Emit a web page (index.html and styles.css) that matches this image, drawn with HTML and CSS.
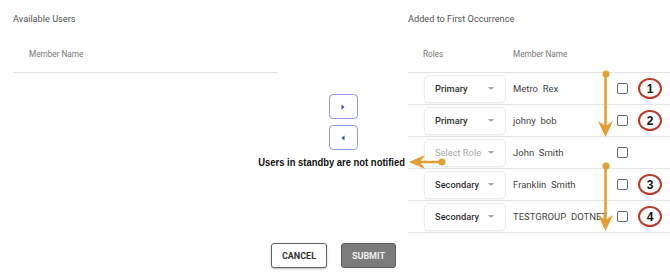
FILE: index.html
```html
<!doctype html>
<html>
<head>
	<meta charset="utf-8">
	<link rel="stylesheet" href="styles.css">
</head>
<body>
<div class="page">
	<div class="lists">
		<section class="panel panel-available">
			<h2 class="panel-title">Available Users</h2>
			<div class="table-head">
				<span class="head-name">Member Name</span>
			</div>
		</section>

		<div class="transfer">
			<button class="move-btn"><svg width="6" height="8" viewBox="0 0 6 8"><path d="M1.5 1.5 L4.5 4 L1.5 6.5 Z" fill="#3949ab"/></svg></button>
			<button class="move-btn"><svg width="6" height="8" viewBox="0 0 6 8"><path d="M4.5 1.5 L1.5 4 L4.5 6.5 Z" fill="#3949ab"/></svg></button>
		</div>

		<section class="panel panel-added">
			<h2 class="panel-title">Added to First Occurrence</h2>
			<div class="table-head">
				<span class="head-role">Roles</span>
				<span class="head-name">Member Name</span>
			</div>

			<div class="row">
				<div class="role-select"><span>Primary</span><i class="caret"></i></div>
				<span class="member">Metro&nbsp; Rex</span>
				<span class="check"></span>
				<span class="badge">1</span>
			</div>
			<div class="row">
				<div class="role-select"><span>Primary</span><i class="caret"></i></div>
				<span class="member">johny&nbsp; bob</span>
				<span class="check"></span>
				<span class="badge">2</span>
			</div>
			<div class="row">
				<div class="role-select empty"><span>Select Role</span><i class="caret"></i></div>
				<span class="member">John&nbsp; Smith</span>
				<span class="check"></span>
			</div>
			<div class="row">
				<div class="role-select"><span>Secondary</span><i class="caret"></i></div>
				<span class="member">Franklin&nbsp; Smith</span>
				<span class="check"></span>
				<span class="badge">3</span>
			</div>
			<div class="row">
				<div class="role-select"><span>Secondary</span><i class="caret"></i></div>
				<span class="member">TESTGROUP&nbsp; DOTNET</span>
				<span class="check"></span>
				<span class="badge">4</span>
			</div>
		</section>
	</div>

	<div class="actions">
		<button class="btn btn-cancel">Cancel</button>
		<button class="btn btn-submit">Submit</button>
	</div>

	<!-- callout arrows drawn over the table -->
	<svg class="annotations" width="670" height="272" viewBox="0 0 670 272">
		<g fill="#e29f33" stroke="#e29f33">
			<circle cx="606" cy="74" r="3.5" stroke="none"/>
			<line x1="605.5" y1="74" x2="605.5" y2="128" stroke-width="2.5"/>
			<path d="M598 121 L605.5 137 L613 121 L605.5 126 Z" stroke="none"/>

			<circle cx="606" cy="166" r="3.5" stroke="none"/>
			<line x1="605.5" y1="166" x2="605.5" y2="222" stroke-width="2.5"/>
			<path d="M598 215 L605.5 231 L613 215 L605.5 220 Z" stroke="none"/>

			<circle cx="442" cy="162" r="3.5" stroke="none"/>
			<line x1="442" y1="162" x2="417" y2="162" stroke-width="2.5"/>
			<path d="M425 155 L409 162 L425 169 L420 162 Z" stroke="none"/>
		</g>
	</svg>
	<div class="note">Users in standby are not notified</div>
</div>
</body>
</html>
```

FILE: styles.css
```css
body { margin: 0; background: #fff; font-family: Roboto, "Liberation Sans", sans-serif; color: #444; }
.page { position: relative; width: 670px; height: 272px; overflow: hidden; }

.lists { display: flex; padding-top: 12px; }
.panel-available { width: 265px; margin-left: 13px; }
.panel-added { flex: 1; }
.panel-title { margin: 0; font-size: 9.2px; font-weight: 400; line-height: 14px; color: #555; }

.table-head { display: flex; align-items: center; height: 36px; margin-top: 10px; border-bottom: 1px solid #e4e4e4; font-size: 8.2px; color: #777; }
.panel-available .head-name { padding-left: 16px; }
.head-role { width: 90px; padding-left: 15px; }

.transfer { width: 130px; display: flex; flex-direction: column; align-items: center; gap: 6px; padding-top: 82px; }
.move-btn { width: 29px; height: 25px; padding: 0; display: flex; align-items: center; justify-content: center; background: #fff; border: 1px solid #8f9ce3; border-radius: 4px; cursor: pointer; }

.row { display: flex; align-items: center; height: 31px; border-bottom: 1px solid #e6e6e6; }
.role-select { box-sizing: border-box; width: 82px; height: 28px; margin-left: 16px; padding: 0 11px 0 10px; display: flex; align-items: center; justify-content: space-between; border: 1px solid #ededed; border-radius: 5px; box-shadow: 0 1px 2px rgba(0,0,0,0.05); font-size: 9.3px; font-weight: 500; color: #333; }
.role-select.empty { font-weight: 400; color: #aaa; }
.caret { width: 0; height: 0; border-left: 3.5px solid transparent; border-right: 3.5px solid transparent; border-top: 3.5px solid #a5a5a5; }
.member { width: 104px; margin-left: 7px; font-size: 9.5px; color: #444; white-space: nowrap; }
.check { box-sizing: border-box; width: 11px; height: 11px; border: 1.5px solid #6a6a6a; border-radius: 2px; }
.badge { box-sizing: border-box; width: 24px; height: 21px; margin-left: 10px; display: flex; align-items: center; justify-content: center; border: 2px solid #b83b2b; border-radius: 50%; font: bold 12px "Liberation Sans", sans-serif; color: #111; }

.actions { display: flex; justify-content: center; gap: 14px; margin-top: 10px; padding-right: 3px; }
.btn { height: 25px; padding: 0; border-radius: 3px; font: bold 9px Roboto, sans-serif; text-transform: uppercase; cursor: pointer; }
.btn-cancel { width: 56px; background: #fff; color: #333; border: 1px solid #666; box-shadow: 0 1px 2px rgba(0,0,0,0.3); }
.btn-submit { width: 55px; background: #7b7b7b; color: #eee; border: 1px solid #5d5d5d; }

.annotations { position: absolute; left: 0; top: 0; pointer-events: none; }
.note { position: absolute; right: 265px; top: 155px; font: bold 11.5px "Liberation Sans", sans-serif; line-height: 14px; color: #111; white-space: nowrap; transform: scaleX(0.82); transform-origin: right center; }
```
